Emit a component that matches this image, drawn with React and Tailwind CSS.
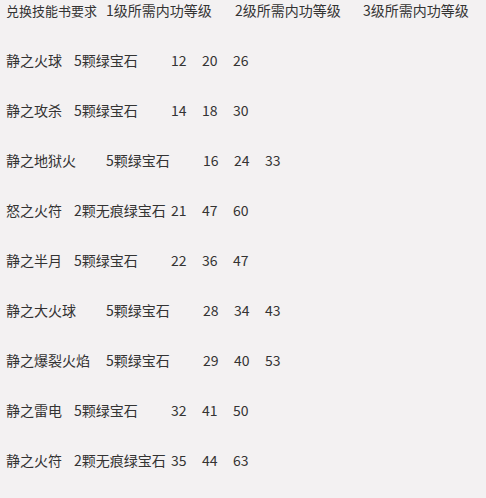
const rows = [
  { name: "静之火球", gem: "5颗绿宝石", lv: ["12", "20", "26"], wide: false },
  { name: "静之攻杀", gem: "5颗绿宝石", lv: ["14", "18", "30"], wide: false },
  { name: "静之地狱火", gem: "5颗绿宝石", lv: ["16", "24", "33"], wide: true },
  { name: "怒之火符", gem: "2颗无痕绿宝石", lv: ["21", "47", "60"], wide: false },
  { name: "静之半月", gem: "5颗绿宝石", lv: ["22", "36", "47"], wide: false },
  { name: "静之大火球", gem: "5颗绿宝石", lv: ["28", "34", "43"], wide: true },
  { name: "静之爆裂火焰", gem: "5颗绿宝石", lv: ["29", "40", "53"], wide: true },
  { name: "静之雷电", gem: "5颗绿宝石", lv: ["32", "41", "50"], wide: false },
  { name: "静之火符", gem: "2颗无痕绿宝石", lv: ["35", "44", "63"], wide: false },
];

export default function App() {
  return (
    <div
      className="w-[486px] h-[498px] bg-[#f3f1f2] text-[#333] text-[14px] leading-[21px] pl-[6px] flex flex-col gap-[29px] overflow-hidden"
      style={{ fontFamily: '"Noto Sans CJK SC", "Noto Sans", sans-serif' }}
    >
      <div className="flex whitespace-nowrap">
        <span className="w-[100px] shrink-0 text-[13px]">兑换技能书要求</span>
        <span className="w-[129px] shrink-0">1级所需内功等级</span>
        <span className="w-[128px] shrink-0">2级所需内功等级</span>
        <span>3级所需内功等级</span>
      </div>
      {rows.map((r) => (
        <div key={r.name} className="flex whitespace-nowrap">
          <span className={r.wide ? "w-[100px] shrink-0" : "w-[68px] shrink-0"}>{r.name}</span>
          <span className="w-[97px] shrink-0">{r.gem}</span>
          <span className="w-[31px] shrink-0">{r.lv[0]}</span>
          <span className="w-[31px] shrink-0">{r.lv[1]}</span>
          <span>{r.lv[2]}</span>
        </div>
      ))}
    </div>
  );
}
